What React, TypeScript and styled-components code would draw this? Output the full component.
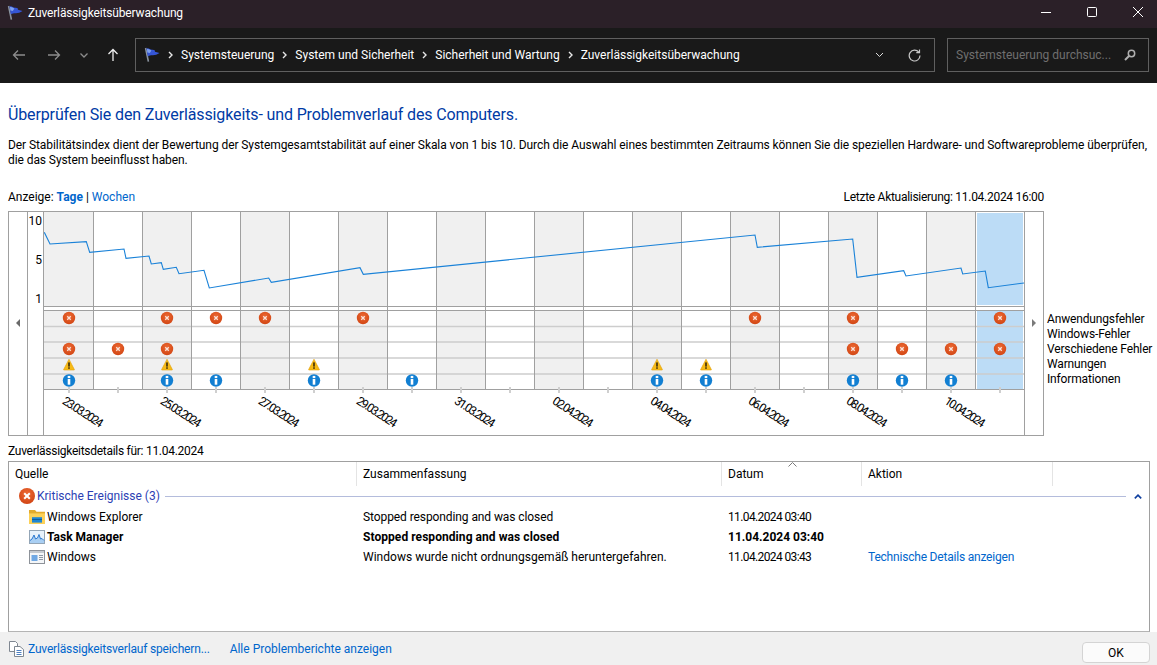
import React from "react";
import styled, { createGlobalStyle } from "styled-components";

const Global = createGlobalStyle`
  html, body { margin: 0; padding: 0; background: #fff; }
  body { font-family: "Roboto", "Liberation Sans", sans-serif; font-size: 12px; color: #000; overflow: hidden; }
`;

const Page = styled.div`
  width: 1157px; height: 665px; display: flex; flex-direction: column; overflow: hidden;
`;
const TitleBar = styled.header`
  height: 28px; flex: none; background: #2b2028; color: #fff; display: flex; align-items: center;
  padding: 0 14px 2px 7px; box-sizing: border-box; font-size: 12px;
`;
const TitleText = styled.span` margin-left: 5px; flex: 1; letter-spacing: -0.15px; `;
const WinControls = styled.div` display: flex; align-items: center; gap: 36px; margin-top: -2px; `;
const Toolbar = styled.div`
  height: 55px; flex: none; box-sizing: border-box; background: #191919; display: flex; align-items: center; padding: 0 8px 1px 4px;
`;
const NavButton = styled.button<{ $w: number }>`
  all: unset; width: ${(p) => p.$w}px; display: flex; justify-content: center; align-items: center; flex: none;
`;
const AddressBox = styled.div`
  margin-left: 3px; width: 800px; height: 34px; box-sizing: border-box; border: 1px solid #5f5f5f;
  display: flex; align-items: center; padding-left: 8px; color: #fff; font-size: 12px; flex: none;
`;
const Crumb = styled.span` margin: 0 0 0 8px; `;
const CrumbSep = styled.span`
  margin-left: 8px; display: inline-flex; width: 5px; justify-content: center;
`;
const AddrEnd = styled.div` margin-left: auto; display: flex; align-items: center; gap: 24px; padding-right: 13px; `;
const SearchBox = styled.div`
  margin-left: 12px; width: 202px; height: 34px; box-sizing: border-box; border: 1px solid #5f5f5f; color: #6f6f6f;
  display: flex; align-items: center; justify-content: space-between; padding: 0 12px 0 8px; font-size: 12px; flex: none;
`;
const Content = styled.main`
  flex: 1; min-height: 0; background: #fff; display: flex; flex-direction: column; padding: 21px 7px 0 8px;
`;
const Heading = styled.h1`
  margin: 0; font-size: 16px; line-height: 22px; font-weight: 400; color: #003aa5; letter-spacing: -0.13px;
`;
const Description = styled.p` margin: 12px 0 0; line-height: 15px; font-size: 12px; color: #000; letter-spacing: -0.08px; `;
const MetaRow = styled.div`
  width: 1036px; height: 16px; margin-top: 21px; display: flex; justify-content: space-between; align-items: center; line-height: 16px;
`;
const UpdatedAt = styled.span` letter-spacing: -0.28px; `;
const ViewLink = styled.span<{ $active?: boolean }>`
  color: #0066cc; font-weight: ${(p) => (p.$active ? 700 : 400)};
`;
const ChartRow = styled.div` display: flex; margin-top: 6px; `;
const ChartFrame = styled.section`
  width: 1036px; height: 225px; box-sizing: border-box; border: 1px solid #a0a0a0; display: flex; flex: none;
`;
const ArrowColumn = styled.div<{ $w: number; $border?: boolean }>`
  width: ${(p) => p.$w}px; flex: none; box-sizing: border-box; display: flex; justify-content: center; padding-top: 107px;
  border-right: ${(p) => (p.$border ? "1px solid #a0a0a0" : "none")};
`;
const Triangle = styled.div<{ $dir: "left" | "right" }>`
  width: 0; height: 0; border-top: 4px solid transparent; border-bottom: 4px solid transparent;
  ${(p) => (p.$dir === "left" ? "border-right: 4px solid #6a6a6a;" : "border-left: 4px solid #7a7a7a;")}
`;
const AxisColumn = styled.div`
  width: 16px; flex: none; box-sizing: border-box; border-right: 1px solid #a0a0a0; display: flex; flex-direction: column;
  align-items: flex-end; gap: 23px; padding: 1px 1px 0 0;
`;
const AxisLabel = styled.span` line-height: 16px; font-size: 12px; `;
const Plot = styled.svg`
  width: 980px; height: 223px; flex: none; display: block; border-right: 1px solid #a0a0a0; box-sizing: content-box;
`;
const DateLabel = styled.text` font-size: 12px; letter-spacing: -1.6px; fill: #000; font-family: "Roboto", sans-serif; `;
const Legend = styled.ul`
  margin: 0 0 0 3px; padding: 101px 0 0; list-style: none; line-height: 15px; font-size: 12px; color: #000; white-space: nowrap; letter-spacing: -0.15px;
`;
const DetailsLabel = styled.div` margin-top: 7px; line-height: 16px; height: 18px; letter-spacing: -0.28px; `;
const Table = styled.section`
  height: 171px; width: 1142px; box-sizing: border-box; border: 1px solid #a0a0a0; border-bottom-color: #b4b4b4; flex: none; position: relative;
`;
const Cols = styled.div`
  display: grid; grid-template-columns: 348px 365px 140px 191px 96px;
`;
const HeadCell = styled.div`
  height: 24px; box-sizing: border-box; padding-left: 6px; display: flex; align-items: center; position: relative;
  border-right: 1px solid #e4e4e4; &:last-child { border-right: none; }
`;
const SortCaret = styled.svg` position: absolute; left: 66px; top: 0; `;
const GroupRow = styled.div`
  height: 20px; display: flex; align-items: center; padding: 0 7px 0 10px;
`;
const GroupTitle = styled.span` color: #2c3fb4; margin-left: 2px; white-space: nowrap; `;
const GroupLine = styled.div` flex: 1; height: 1px; background: #b4bcdc; margin: 0 8px 0 5px; `;
const DataRow = styled(Cols)<{ $bold?: boolean }>`
  height: 20px; align-items: center; font-weight: ${(p) => (p.$bold ? 700 : 400)};
`;
const SourceCell = styled.div` display: flex; align-items: center; gap: 2px; padding-left: 20px; `;
const TextCell = styled.div<{ $ls?: number }>`
  padding-left: 6px; white-space: nowrap; letter-spacing: ${(p) => p.$ls ?? 0}px;
`;
const DateCell = styled.div<{ $bold?: boolean }>`
  padding-left: 6px; white-space: nowrap; letter-spacing: ${(p) => (p.$bold ? "0" : "-0.62px")};
`;
const ActionLink = styled.span` color: #0066cc; font-weight: 400; letter-spacing: -0.2px; `;
const Rows = styled.div` margin-top: 1px; `;
const Footer = styled.footer`
  height: 33px; flex: none; background: #f0f0f0; display: flex; align-items: center; padding: 0 7px 0 9px; box-sizing: border-box;
`;
const FooterLink = styled.span<{ $gap: number; $tight?: boolean }>`
  color: #0066cc; margin-left: ${(p) => p.$gap}px; letter-spacing: ${(p) => (p.$tight ? "-0.17px" : "0")};
`;
const OkButton = styled.button`
  margin-left: auto; width: 68px; height: 21px; border: 1px solid #d4d4d4; border-radius: 4px; background: #fbfbfb;
  font: inherit; color: #000; padding: 0; align-self: flex-end; margin-bottom: 2px;
`;

const Flag = ({ size = 16 }: { size?: number }) => (
  <svg width={size} height={size} viewBox="0 0 16 16">
    <path d="M1.6 1 L4.4 14.6" stroke="#8a94a0" strokeWidth="1.6" fill="none" />
    <path d="M2.4 1.6 C4.6 .6 6 2.6 8 2.8 C9.4 2.9 10.5 3 10.5 3 L11 4.8 L15.5 6 C13 7.6 11.2 8.2 9 8.2 C7.4 8.2 6 8 3.8 9.4 Z" fill="#3556d6" />
    <path d="M3 2.2 C4.6 1.6 5.6 3 7.4 3.4 L5.8 6 L3.4 5.6 Z" fill="#7fa2ee" />
  </svg>
);
const Arrow = ({ d, color }: { d: string; color: string }) => (
  <svg width="14" height="14" viewBox="0 0 14 14" fill="none" stroke={color} strokeWidth="1.3">
    <path d={d} />
  </svg>
);
const Sep = () => (
  <CrumbSep>
    <svg width="5" height="8" viewBox="0 0 5 8" fill="none" stroke="#e8e8e8" strokeWidth="1.4">
      <path d="M1 1 L4 4 L1 7" />
    </svg>
  </CrumbSep>
);

const ErrorGlyph = ({ x, y, r = 6.2 }: { x: number; y: number; r?: number }) => (
  <g transform={`translate(${x} ${y}) scale(${r / 6})`}>
    <circle r="6" fill="url(#errFill)" />
    <path d="M-1.7 -1.7 L1.7 1.7 M1.7 -1.7 L-1.7 1.7" stroke="#fbe3da" strokeWidth="1.3" />
  </g>
);
const WarnGlyph = ({ x, y }: { x: number; y: number }) => (
  <g transform={`translate(${x} ${y})`}>
    <path d="M0 -5.8 L5.4 4.6 Q5.6 5 5 5 L-5 5 Q-5.6 5 -5.4 4.6 Z" fill="#f7bb16" stroke="#e3a00c" strokeWidth=".6" />
    <rect x="-0.8" y="-2.6" width="1.6" height="4.2" fill="#3a2a08" />
    <rect x="-0.8" y="2.3" width="1.6" height="1.5" fill="#3a2a08" />
  </g>
);
const InfoGlyph = ({ x, y }: { x: number; y: number }) => (
  <g transform={`translate(${x} ${y})`}>
    <circle r="6.2" fill="#127fd2" />
    <rect x="-1.3" y="-1.6" width="2.6" height="5.8" fill="#fff" />
    <rect x="-1.3" y="-4.6" width="2.6" height="2.1" fill="#fff" />
  </g>
);
const GroupError = () => (
  <svg width="16" height="16" viewBox="-8 -8 16 16">
    <defs>
      <radialGradient id="errBig" cx="50%" cy="35%" r="70%">
        <stop offset="0%" stopColor="#ee6a35" />
        <stop offset="100%" stopColor="#cf4212" />
      </radialGradient>
    </defs>
    <circle r="8" fill="url(#errBig)" />
    <path d="M-2.8 -2.8 L2.8 2.8 M2.8 -2.8 L-2.8 2.8" stroke="#fff" strokeWidth="2" />
  </svg>
);
const FolderIcon = () => (
  <svg width="16" height="16" viewBox="0 0 16 16">
    <path d="M0 1 H6 L7.5 2.8 H16 V5 H0 Z" fill="#e3ab2c" />
    <rect y="4.4" width="16" height="10.6" fill="#fcd158" />
    <rect x="3" y="8.2" width="10" height="5.4" fill="#1f86d4" />
    <rect x="3" y="10" width="10" height="1" fill="#0f5f9f" />
  </svg>
);
const TaskIcon = () => (
  <svg width="16" height="16" viewBox="0 0 16 16">
    <rect x=".5" y="1.5" width="15" height="13" fill="#e6f1fb" stroke="#93a5b6" />
    <path d="M1 11.5 L3 10 L5 6 L6.5 10 L8.5 9 L10 5.5 L11.5 10 L13 9.5 L15 11.5 V14 H1 Z" fill="#a9cff3" />
    <path d="M1 11.5 L3 10 L5 6 L6.5 10 L8.5 9 L10 5.5 L11.5 10 L13 9.5 L15 11.5" fill="none" stroke="#2a78d0" />
  </svg>
);
const WinIcon = () => (
  <svg width="16" height="16" viewBox="0 0 16 16">
    <rect x=".5" y="1.5" width="15" height="13" fill="#f4f6f8" stroke="#8d9299" />
    <rect x="1" y="2" width="14" height="2" fill="#c5cad0" />
    <rect x="2.5" y="6" width="6" height="6" fill="#6fa8e4" />
    <path d="M10 6.5 H14 M10 8.5 H14 M10 10.5 H14" stroke="#8d98a5" />
  </svg>
);
const DocsIcon = () => (
  <svg width="15" height="16" viewBox="0 0 15 16" fill="#fff" stroke="#7f8791">
    <path d="M.5 .5 H6.5 L8.5 2.5 V10.5 H.5 Z" />
    <path d="M5.5 5.5 H11 L14.5 8.5 V15.5 H5.5 Z" />
    <path d="M7.5 9.5 H12.5 M7.5 11.5 H12.5 M7.5 13.5 H12.5" stroke="#4d7fc0" />
  </svg>
);

const colX = (i: number) => 68.5 + 49 * i;
const linePoints =
  "44.3,232.3 50,244 86.3,241.7 89.7,252.3 124,249 126,258.3 149,256 151.3,264 161.3,262.7 163.3,269.3 176.3,267.3 179,273.7 204,270.3 209.3,288 268.7,278 271.3,282.3 360,267.7 363.3,274.3 755,235 757.3,247.3 852.7,239 857,277.3 903.7,270.7 906,276 961,268 962.7,274 985.3,271 988.3,287.7 1024,283";
const dates = ["23.03.2024", "25.03.2024", "27.03.2024", "29.03.2024", "31.03.2024", "02.04.2024", "04.04.2024", "06.04.2024", "08.04.2024", "10.04.2024"];
const appErrors = [0, 2, 3, 4, 6, 14, 16, 19];
const miscErrors = [0, 1, 2, 16, 17, 18, 19];
const warnings = [0, 2, 5, 12, 13];
const infos = [0, 2, 3, 5, 7, 12, 13, 16, 17, 18];
const colIdx = Array.from({ length: 20 }, (_, i) => i);
const rowLines = [326.5, 342, 358, 374];

const Chart = () => (
  <Plot viewBox="44 212 980 223">
    <defs>
      <radialGradient id="errFill" cx="50%" cy="35%" r="70%">
        <stop offset="0%" stopColor="#ec6832" />
        <stop offset="100%" stopColor="#d04412" />
      </radialGradient>
    </defs>
    {colIdx.filter((i) => i % 2 === 0).map((i) => (
      <React.Fragment key={i}>
        <rect x={44 + 49 * i} y={212} width={49} height={94} fill="#f0f0f0" />
        <rect x={44 + 49 * i} y={311} width={49} height={78} fill="#f0f0f0" />
      </React.Fragment>
    ))}
    <rect x={977} y={213} width={46} height={92} fill="#bcdcf6" />
    <rect x={977} y={311} width={46} height={78} fill="#bcdcf6" />
    {rowLines.map((y) => (
      <line key={y} x1={44} x2={1024} y1={y} y2={y} stroke="#cdcdcd" strokeWidth="1.6" />
    ))}
    {colIdx.slice(0, 19).map((i) => (
      <line key={i} x1={93.5 + 49 * i} x2={93.5 + 49 * i} y1={212} y2={389} stroke="#a0a0a0" />
    ))}
    <path d="M44 306.5 H1024 M44 310.5 H1024 M44 389.5 H1024" stroke="#a0a0a0" fill="none" />
    {colIdx.map((i) => (
      <rect key={i} x={colX(i) - 0.5} y={387} width={2} height={6} fill="#cfcfcf" />
    ))}
    <polyline points={linePoints} fill="none" stroke="#1a82d8" strokeWidth="1.1" />
    {appErrors.map((i) => <ErrorGlyph key={i} x={colX(i) + 0.5} y={318} />)}
    {miscErrors.map((i) => <ErrorGlyph key={i} x={colX(i) + 0.5} y={349} />)}
    {warnings.map((i) => <WarnGlyph key={i} x={colX(i) + 0.5} y={365} />)}
    {infos.map((i) => <InfoGlyph key={i} x={colX(i) + 0.5} y={380.5} />)}
    {dates.map((d, k) => {
      const x = colX(k * 2) - 7;
      return (
        <DateLabel key={d} x={x} y={403} transform={`rotate(33 ${x} 403)`}>
          {d}
        </DateLabel>
      );
    })}
  </Plot>
);

export default function App() {
  return (
    <Page>
      <Global />
      <TitleBar>
        <Flag />
        <TitleText>Zuverlässigkeitsüberwachung</TitleText>
        <WinControls>
          <svg width="10" height="10" viewBox="0 0 10 10" stroke="#fff" fill="none"><path d="M0 5.5 H10" /></svg>
          <svg width="10" height="10" viewBox="0 0 10 10" stroke="#fff" fill="none"><rect x=".5" y=".5" width="9" height="9" rx="1" /></svg>
          <svg width="10" height="10" viewBox="0 0 10 10" stroke="#fff" fill="none"><path d="M0 0 L10 10 M10 0 L0 10" /></svg>
        </WinControls>
      </TitleBar>
      <Toolbar>
        <NavButton $w={30}><Arrow color="#8c8c8c" d="M13 7 H1.5 M6 2.5 L1.5 7 L6 11.5" /></NavButton>
        <NavButton $w={40}><Arrow color="#8c8c8c" d="M1 7 H12.5 M8 2.5 L12.5 7 L8 11.5" /></NavButton>
        <NavButton $w={20}><Arrow color="#8c8c8c" d="M3.5 5.5 L7 9 L10.5 5.5" /></NavButton>
        <NavButton $w={38}><Arrow color="#eeeeee" d="M7 13 V1.5 M2.5 6 L7 1.5 L11.5 6" /></NavButton>
        <AddressBox>
          <Flag />
          <Sep /><Crumb>Systemsteuerung</Crumb>
          <Sep /><Crumb>System und Sicherheit</Crumb>
          <Sep /><Crumb>Sicherheit und Wartung</Crumb>
          <Sep /><Crumb>Zuverlässigkeitsüberwachung</Crumb>
          <AddrEnd>
            <svg width="9" height="6" viewBox="0 0 9 6" fill="none" stroke="#dcdcdc"><path d="M1 1 L4.5 4.5 L8 1" /></svg>
            <svg width="13" height="13" viewBox="0 0 13 13" fill="none" stroke="#c8c8c8" strokeWidth="1.2">
              <path d="M10.8 3.2 A5.4 5.4 0 1 0 12 6.5" />
              <path d="M11.5 .5 V3.7 H8.3" />
            </svg>
          </AddrEnd>
        </AddressBox>
        <SearchBox>
          <span>Systemsteuerung durchsuc...</span>
          <svg width="12" height="12" viewBox="0 0 12 12" fill="none" stroke="#b0b0b0" strokeWidth="1.5">
            <circle cx="7.5" cy="4.5" r="3.2" />
            <path d="M5 7 L1 11" strokeWidth="2" />
          </svg>
        </SearchBox>
      </Toolbar>
      <Content>
        <Heading>Überprüfen Sie den Zuverlässigkeits- und Problemverlauf des Computers.</Heading>
        <Description>
          Der Stabilitätsindex dient der Bewertung der Systemgesamtstabilität auf einer Skala von 1 bis 10. Durch die Auswahl eines bestimmten Zeitraums können Sie die speziellen Hardware- und Softwareprobleme überprüfen, die das System beeinflusst haben.
        </Description>
        <MetaRow>
          <span>Anzeige: <ViewLink $active>Tage</ViewLink> | <ViewLink>Wochen</ViewLink></span>
          <UpdatedAt>Letzte Aktualisierung: 11.04.2024 16:00</UpdatedAt>
        </MetaRow>
        <ChartRow>
          <ChartFrame>
            <ArrowColumn $w={19} $border><Triangle $dir="left" /></ArrowColumn>
            <AxisColumn>
              <AxisLabel>10</AxisLabel>
              <AxisLabel>5</AxisLabel>
              <AxisLabel>1</AxisLabel>
            </AxisColumn>
            <Chart />
            <ArrowColumn $w={18}><Triangle $dir="right" /></ArrowColumn>
          </ChartFrame>
          <Legend>
            <li>Anwendungsfehler</li>
            <li>Windows-Fehler</li>
            <li>Verschiedene Fehler</li>
            <li>Warnungen</li>
            <li>Informationen</li>
          </Legend>
        </ChartRow>
        <DetailsLabel>Zuverlässigkeitsdetails für: 11.04.2024</DetailsLabel>
        <Table>
          <Cols>
            <HeadCell>Quelle</HeadCell>
            <HeadCell>Zusammenfassung</HeadCell>
            <HeadCell>
              Datum
              <SortCaret width="9" height="5" viewBox="0 0 9 5" fill="none" stroke="#7a7a7a"><path d="M.5 4.5 L4.5 .5 L8.5 4.5" /></SortCaret>
            </HeadCell>
            <HeadCell>Aktion</HeadCell>
            <HeadCell />
          </Cols>
          <GroupRow>
            <GroupError />
            <GroupTitle>Kritische Ereignisse (3)</GroupTitle>
            <GroupLine />
            <svg width="8" height="5" viewBox="0 0 8 5" fill="none" stroke="#0f3f9f" strokeWidth="1.6"><path d="M.8 4.4 L4 1.2 L7.2 4.4" /></svg>
          </GroupRow>
          <Rows>
            <DataRow>
              <SourceCell><FolderIcon />Windows Explorer</SourceCell>
              <TextCell $ls={-0.09}>Stopped responding and was closed</TextCell>
              <DateCell>11.04.2024 03:40</DateCell>
            </DataRow>
            <DataRow $bold>
              <SourceCell><TaskIcon />Task Manager</SourceCell>
              <TextCell $ls={0.06}>Stopped responding and was closed</TextCell>
              <DateCell $bold>11.04.2024 03:40</DateCell>
            </DataRow>
            <DataRow>
              <SourceCell><WinIcon />Windows</SourceCell>
              <TextCell $ls={0.02}>Windows wurde nicht ordnungsgemäß heruntergefahren.</TextCell>
              <DateCell>11.04.2024 03:43</DateCell>
              <TextCell><ActionLink>Technische Details anzeigen</ActionLink></TextCell>
            </DataRow>
          </Rows>
        </Table>
      </Content>
      <Footer>
        <DocsIcon />
        <FooterLink $gap={4} $tight>Zuverlässigkeitsverlauf speichern...</FooterLink>
        <FooterLink $gap={20}>Alle Problemberichte anzeigen</FooterLink>
        <OkButton>OK</OkButton>
      </Footer>
    </Page>
  );
}
